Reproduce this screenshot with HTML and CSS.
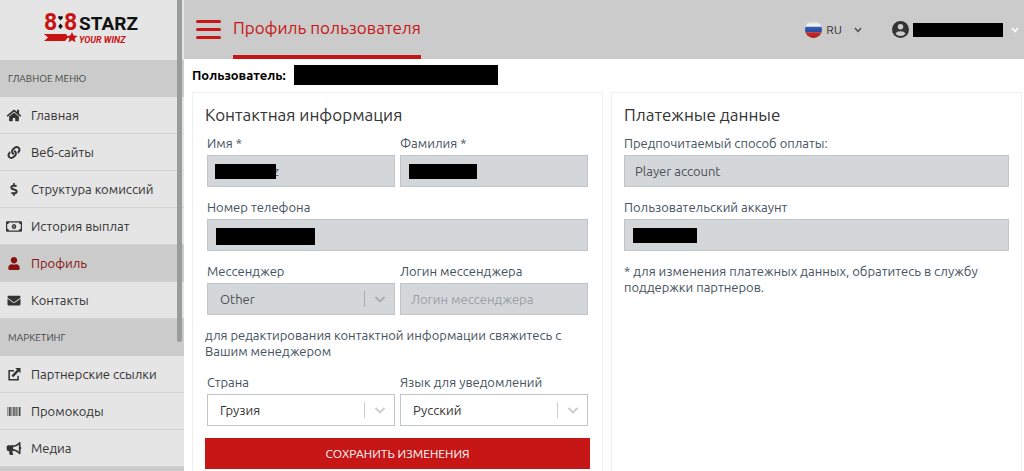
FILE: index.html
```
<!DOCTYPE html>
<html lang="ru">
<head>
    <meta charset="UTF-8">
    <meta name="viewport" content="width=device-width, initial-scale=1">
    <title>Профиль пользователя</title>
    <link rel="stylesheet" href="styles.css">
</head>
<body>
<div class="layout">
    <aside class="sidebar">
        <a class="logo" href="#">
            <svg width="96" height="40" viewBox="0 -6 96 40">
                <text class="logo-eight" x="0" y="18">8</text>
                <text class="logo-eight" x="20" y="18">8</text>
                <path d="M16.500 8.500l-2.200-2.400a1.300 1.300 0 0 1 2.200-1.400 1.300 1.300 0 0 1 2.200 1.400z" fill="#111"/>
                <path d="M16.500 11.500l1.900 2.300a1.200 1.200 0 0 1-1.500 1.800l.6 1.200h-2l.6-1.200a1.200 1.200 0 0 1-1.500-1.800z" fill="#111"/>
                <text class="logo-name" x="35" y="18">STARZ</text>
                <path d="M0 22h22l2 3.500-3 3.500H0l4-3.500z" fill="#c91212"/>
                <path d="M28 20l1.600 3.500 3.900.4-2.900 2.600.9 3.800-3.500-2-3.500 2 .9-3.800-2.900-2.600 3.900-.4z" fill="#c91212"/>
                <text class="logo-slogan" x="35" y="31">YOUR WINZ</text>
            </svg>
        </a>
        <h2 class="menu-title">ГЛАВНОЕ МЕНЮ</h2>
        <ul class="menu">
            <li><a href="#">
                <svg class="icon" viewBox="0 0 576 512"><path d="M280.37 148.26L96 300.11V464a16 16 0 0 0 16 16l112.06-.29a16 16 0 0 0 15.92-16V368a16 16 0 0 1 16-16h64a16 16 0 0 1 16 16v95.64a16 16 0 0 0 16 16.05L464 480a16 16 0 0 0 16-16V300L295.67 148.26a12.19 12.19 0 0 0-15.3 0zM571.6 251.47L488 182.56V44.05a12 12 0 0 0-12-12h-56a12 12 0 0 0-12 12v72.61L318.47 43a48 48 0 0 0-61 0L4.34 251.47a12 12 0 0 0-1.6 16.9l25.5 31A12 12 0 0 0 45.15 301l235.22-193.74a12.19 12.19 0 0 1 15.3 0L530.9 301a12 12 0 0 0 16.9-1.6l25.5-31a12 12 0 0 0-1.7-16.93z"/></svg>
                Главная</a></li>
            <li><a href="#">
                <svg class="icon" viewBox="0 0 512 512"><path d="M326.612 185.391c59.747 59.809 58.927 155.698.36 214.59-.11.12-.24.25-.36.37l-67.2 67.2c-59.27 59.27-155.699 59.262-214.96 0-59.27-59.26-59.27-155.7 0-214.96l37.106-37.106c9.84-9.84 26.786-3.3 27.294 10.606.648 17.722 3.826 35.527 9.69 52.721 1.986 5.822.567 12.262-3.783 16.612l-13.087 13.087c-28.026 28.026-28.905 73.66-1.155 101.96 28.024 28.579 74.086 28.749 102.325.51l67.2-67.19c28.191-28.191 28.073-73.757 0-101.83-3.701-3.694-7.429-6.564-10.341-8.569a16.037 16.037 0 0 1-6.947-12.606c-.396-10.567 3.348-21.456 11.698-29.806l21.054-21.055c5.521-5.521 14.182-6.199 20.584-1.731a152.482 152.482 0 0 1 20.522 17.197zM467.547 44.449c-59.261-59.262-155.69-59.27-214.96 0l-67.2 67.2c-.12.12-.25.25-.36.37-58.566 58.892-59.387 154.781.36 214.59a152.454 152.454 0 0 0 20.521 17.196c6.402 4.468 15.064 3.789 20.584-1.731l21.054-21.055c8.35-8.35 12.094-19.239 11.698-29.806a16.037 16.037 0 0 0-6.947-12.606c-2.912-2.005-6.64-4.875-10.341-8.569-28.073-28.073-28.191-73.639 0-101.83l67.2-67.19c28.239-28.239 74.3-28.069 102.325.51 27.75 28.3 26.872 73.934-1.155 101.96l-13.087 13.087c-4.35 4.35-5.769 10.79-3.783 16.612 5.864 17.194 9.042 34.999 9.69 52.721.509 13.906 17.454 20.446 27.294 10.606l37.106-37.106c59.271-59.259 59.271-155.699.001-214.959z"/></svg>
                Веб-сайты</a></li>
            <li><a href="#">
                <svg class="icon" viewBox="0 0 288 512"><path d="M209.2 233.4l-108-31.6C88.7 198.2 80 186.5 80 173.5c0-16.3 13.2-29.5 29.5-29.5h66.3c12.2 0 24.2 3.7 34.2 10.5 6.1 4.1 14.3 3.1 19.5-2l34.8-34c7.1-6.9 6.1-18.4-1.8-24.5C238 74.8 207.4 64.1 176 64V16c0-8.8-7.2-16-16-16h-32c-8.8 0-16 7.2-16 16v48h-2.5C45.8 64-5.4 118.7.5 183.6c4.2 46.1 39.4 83.6 83.8 96.6l102.5 30c12.5 3.7 21.2 15.3 21.2 28.3 0 16.3-13.2 29.5-29.5 29.5h-66.3C100 368 88 364.3 78 357.5c-6.1-4.1-14.3-3.1-19.5 2l-34.8 34c-7.1 6.9-6.1 18.4 1.8 24.5 24.5 19.2 55.1 29.9 86.5 30v48c0 8.8 7.2 16 16 16h32c8.8 0 16-7.2 16-16v-48.2c46.6-.9 90.3-28.6 105.7-72.7 21.5-61.6-14.6-124.8-72.5-141.7z"/></svg>
                Структура комиссий</a></li>
            <li><a href="#">
                <svg class="icon" viewBox="0 0 16 12"><path fill-rule="evenodd" d="M1 .8h14a1 1 0 0 1 1 1v8.400a1 1 0 0 1-1 1H1a1 1 0 0 1-1-1V1.800a1 1 0 0 1 1-1zM3 2.100a1.800 1.800 0 0 1-1.800 1.700v4.400A1.800 1.800 0 0 1 3 9.900h10a1.800 1.800 0 0 1 1.800-1.700V3.800A1.800 1.800 0 0 1 13 2.100z"/><ellipse cx="8" cy="6" rx="2.200" ry="2.600"/><path d="M8 4.700v2.600" stroke="#e5e5e5" stroke-width=".8"/></svg>
                История выплат</a></li>
            <li class="active"><a href="#">
                <svg class="icon" viewBox="0 0 448 512"><path d="M224 256c70.7 0 128-57.3 128-128S294.7 0 224 0 96 57.3 96 128s57.3 128 128 128zm89.6 32h-16.7c-22.2 10.2-46.9 16-72.9 16s-50.6-5.8-72.9-16h-16.7C60.2 288 0 348.2 0 422.4V464c0 26.5 21.5 48 48 48h352c26.5 0 48-21.5 48-48v-41.6c0-74.2-60.2-134.4-134.4-134.4z"/></svg>
                Профиль</a></li>
            <li><a href="#">
                <svg class="icon" viewBox="0 0 512 512"><path d="M502.3 190.8c3.9-3.1 9.7-.2 9.7 4.7V400c0 26.5-21.5 48-48 48H48c-26.5 0-48-21.5-48-48V195.6c0-5 5.7-7.8 9.7-4.7 22.4 17.4 52.1 39.5 154.1 113.6 21.1 15.4 56.7 47.8 92.2 47.6 35.7.3 72-32.8 92.3-47.6 102-74.1 131.6-96.3 154-113.7zM256 320c23.2.4 56.6-29.2 73.4-41.4 132.7-96.3 142.8-104.7 173.4-128.7 5.8-4.5 9.2-11.5 9.2-18.9v-19c0-26.5-21.5-48-48-48H48c-26.5 0-48 21.5-48 48v19c0 7.4 3.4 14.3 9.2 18.9 30.6 23.9 40.7 32.4 173.4 128.7 16.8 12.2 50.2 41.8 73.4 41.4z"/></svg>
                Контакты</a></li>
        </ul>
        <h2 class="menu-title">МАРКЕТИНГ</h2>
        <ul class="menu">
            <li><a href="#">
                <svg class="icon" viewBox="0 0 16 16"><path d="M8 3.500H2v11h11V9.500" fill="none" stroke="#333" stroke-width="1.900"/><path d="M9.500 0H16v6.500l-2.100-2.100-6.900 6.900-2.100-2.100 6.900-6.900z"/></svg>
                Партнерские ссылки</a></li>
            <li><a href="#">
                <svg class="icon" viewBox="0 0 16 13"><path d="M1.500 2h.8v9h-.8zM3 2h1.700v9H3zM5.500 2h.8v9h-.8zM7.200 2h1.500v9H7.200zM9.500 2h1.200v9H9.500zM11.500 2h.8v9h-.8zM13 2h1.500v9H13z" opacity=".85"/></svg>
                Промокоды</a></li>
            <li><a href="#">
                <svg class="icon" viewBox="0 0 576 512"><path d="M576 240c0-23.63-12.95-44.04-32-55.12V32.01C544 23.26 537.02 0 512 0c-7.12 0-14.19 2.38-19.98 7.02l-85.03 68.03C364.28 109.19 310.66 128 256 128H64c-35.35 0-64 28.65-64 64v96c0 35.35 28.65 64 64 64h33.7c-1.39 10.48-2.18 21.14-2.18 32 0 39.77 9.26 77.35 25.56 110.94 5.19 10.69 16.52 17.06 28.4 17.06h74.28c26.05 0 41.69-29.84 25.9-50.56-16.4-21.52-26.15-48.36-26.15-77.44 0-11.11 1.62-21.79 4.41-32H256c54.66 0 108.28 18.81 150.98 52.95l85.03 68.03a32.023 32.023 0 0 0 19.98 7.02c24.92 0 32-22.78 32-32V295.13C563.05 284.04 576 263.63 576 240zm-96 141.42l-33.05-26.44C392.95 311.78 325.12 288 256 288v-96c69.12 0 136.95-23.78 190.95-66.98L480 98.58v282.84z"/></svg>
                Медиа</a></li>
        </ul>
        <div class="menu-title"></div>
        <div class="scroll-thumb"></div>
    </aside>

    <div class="content">
        <header class="header">
            <button class="burger" type="button" aria-label="Меню"><i></i><i></i><i></i></button>
            <h1 class="page-title">Профиль пользователя</h1>
            <button class="lang" type="button">
                <svg width="17" height="17" viewBox="0 0 18 18">
                    <defs>
                        <clipPath id="ball"><circle cx="9" cy="9" r="9"/></clipPath>
                        <linearGradient id="shine" x1="0" y1="0" x2="0" y2="1">
                            <stop offset="0" stop-color="#888" stop-opacity=".4"/>
                            <stop offset=".3" stop-color="#fff" stop-opacity=".2"/>
                            <stop offset="1" stop-color="#000" stop-opacity=".2"/>
                        </linearGradient>
                    </defs>
                    <g clip-path="url(#ball)">
                        <path d="M0 0h18v6H0z" fill="#f4f4f4"/>
                        <path d="M0 6h18v6H0z" fill="#0b3da8"/>
                        <path d="M0 12h18v6H0z" fill="#d81e1e"/>
                        <path d="M0 0h18v18H0z" fill="url(#shine)"/>
                    </g>
                </svg>
                <span>RU</span>
                <svg class="lang-arrow" width="8" height="6" viewBox="0 0 8 6"><path d="M1 1l3 3.500L7 1" fill="none" stroke="#444" stroke-width="1.200"/></svg>
            </button>
            <button class="account" type="button" aria-label="Аккаунт">
                <svg width="17" height="17" viewBox="0 0 16 16"><circle cx="8" cy="8" r="8" fill="#333"/><circle cx="8" cy="5.500" r="2.600" fill="#ccc"/><path d="M3.300 12c.6-1.700 2.700-2.400 4.700-2.400s4.100.7 4.700 2.400A6 6 0 0 1 8 14.200 6 6 0 0 1 3.300 12z" fill="#ccc"/></svg>
                <span class="mask account-mask"></span>
                <svg width="8" height="6" viewBox="0 0 8 6"><path d="M1 1l3 3.500L7 1" fill="none" stroke="#fff" stroke-width="1.500"/></svg>
            </button>
        </header>

        <main class="main">
            <div class="user"><b>Пользователь:</b><span class="mask user-mask"></span></div>
            <div class="panels">
                <section class="panel">
                    <h3>Контактная информация</h3>
                    <form>
                        <div class="fields">
                            <div class="field">
                                <label for="name">Имя *</label>
                                <div class="control">
                                    <input class="masked" id="name" type="text" value="z" disabled>
                                    <span class="mask name-mask"></span>
                                </div>
                            </div>
                            <div class="field">
                                <label for="surname">Фамилия *</label>
                                <div class="control">
                                    <input id="surname" type="text" disabled>
                                    <span class="mask surname-mask"></span>
                                </div>
                            </div>
                            <div class="field wide">
                                <label for="phone">Номер телефона</label>
                                <div class="control">
                                    <input id="phone" type="tel" disabled>
                                    <span class="mask phone-mask"></span>
                                </div>
                            </div>
                            <div class="field">
                                <label for="messenger">Мессенджер</label>
                                <div class="control">
                                    <select id="messenger" disabled><option>Other</option></select>
                                    <svg class="arrow" viewBox="0 0 31 16"><path d="M.5 0v16" stroke="#aaa"/><path d="M11.500 6l4.500 4.500L20.500 6" fill="none" stroke="#aaa" stroke-width="1.800"/></svg>
                                </div>
                            </div>
                            <div class="field">
                                <label for="login">Логин мессенджера</label>
                                <div class="control">
                                    <input id="login" type="text" placeholder="Логин мессенджера" disabled>
                                </div>
                            </div>
                        </div>
                        <p class="note">для редактирования контактной информации свяжитесь с Вашим менеджером</p>
                        <div class="fields">
                            <div class="field">
                                <label for="country">Страна</label>
                                <div class="control">
                                    <select id="country"><option>Грузия</option></select>
                                    <svg class="arrow" viewBox="0 0 31 16"><path d="M.5 0v16" stroke="#ccc"/><path d="M11.500 6l4.500 4.500L20.500 6" fill="none" stroke="#ccc" stroke-width="1.800"/></svg>
                                </div>
                            </div>
                            <div class="field">
                                <label for="language">Язык для уведомлений</label>
                                <div class="control">
                                    <select id="language"><option>Русский</option></select>
                                    <svg class="arrow" viewBox="0 0 31 16"><path d="M.5 0v16" stroke="#ccc"/><path d="M11.500 6l4.500 4.500L20.500 6" fill="none" stroke="#ccc" stroke-width="1.800"/></svg>
                                </div>
                            </div>
                        </div>
                        <button class="save" type="submit">СОХРАНИТЬ ИЗМЕНЕНИЯ</button>
                    </form>
                </section>

                <section class="panel">
                    <h3>Платежные данные</h3>
                    <div class="payment">
                        <div class="field">
                            <label for="method">Предпочитаемый способ оплаты:</label>
                            <div class="control">
                                <input id="method" type="text" value="Player account" disabled>
                            </div>
                        </div>
                        <div class="field">
                            <label for="player">Пользовательский аккаунт</label>
                            <div class="control">
                                <input id="player" type="text" disabled>
                                <span class="mask player-mask"></span>
                            </div>
                        </div>
                    </div>
                    <p class="note">* для изменения платежных данных, обратитесь в службу поддержки партнеров.</p>
                </section>
            </div>
        </main>
    </div>
</div>
</body>
</html>
```
FILE: styles.css
```
* {
    box-sizing: border-box;
    margin: 0;
    padding: 0;
}
body {
    font-family: Ubuntu, "Noto Sans", sans-serif;
    font-size: 13px;
    line-height: 16px;
    color: #45525e;
    background: #fff;
}
button, input, select {
    font: inherit;
    color: inherit;
}
button {
    border: 0;
    background: none;
    cursor: pointer;
}
.layout {
    display: flex;
    height: 100vh;
    overflow: hidden;
}

/* sidebar */
.sidebar {
    position: relative;
    flex: 0 0 184px;
    overflow: hidden;
    background: #e5e5e5;
}
.logo {
    display: flex;
    justify-content: center;
    height: 60px;
    padding-top: 6px;
}
.logo-eight {
    font: bold 23px "Roboto", sans-serif;
    fill: #c91212;
}
.logo-name {
    font: bold 19px "Roboto", sans-serif;
    fill: #111;
}
.logo-slogan {
    font: italic bold 9px "Roboto", sans-serif;
    fill: #c91212;
}
.menu-title {
    height: 37px;
    padding-left: 8px;
    font-size: 10px;
    font-weight: normal;
    line-height: 37px;
    color: #444;
    background: #cbcbcb;
}
.menu {
    list-style: none;
}
.menu a {
    display: flex;
    align-items: center;
    gap: 9px;
    height: 37px;
    padding-left: 6px;
    border-bottom: 1px solid #d2d2d2;
    color: #333;
    text-decoration: none;
}
.menu .active a {
    color: #861212;
    background: #cbcbcb;
}
.icon {
    width: 16px;
    height: 13px;
    fill: currentColor;
}
.scroll-thumb {
    position: absolute;
    top: 0;
    right: 2px;
    width: 5px;
    height: 342px;
    border-radius: 0 0 3px 3px;
    background: #9a9b9d;
}

/* header */
.content {
    flex: 1;
    min-width: 0;
}
.header {
    display: flex;
    align-items: center;
    height: 59px;
    padding: 0 5px 0 12px;
    background: #cbcbcb;
}
.burger {
    display: flex;
    flex-direction: column;
    gap: 5px;
    width: 25px;
    margin-right: 12px;
}
.burger i {
    height: 3px;
    border-radius: 2px;
    background: #c61616;
}
.page-title {
    height: 59px;
    margin-right: auto;
    border-bottom: 4px solid #c61616;
    font-size: 17px;
    font-weight: normal;
    line-height: 55px;
    color: #c61616;
}
.lang, .account {
    display: flex;
    align-items: center;
    font-size: 12px;
    color: #333;
}
.lang {
    gap: 4px;
    margin-right: 30px;
}
.lang-arrow {
    margin-left: 8px;
}
.account {
    gap: 4px;
}
.mask {
    display: block;
    background: #000;
}
.account-mask {
    width: 90px;
    height: 14px;
    margin-right: 4px;
}

/* profile */
.main {
    padding: 6px 2px 0 8px;
}
.user {
    display: flex;
    align-items: center;
    gap: 8px;
    height: 20px;
    color: #000;
}
.user-mask {
    width: 204px;
    height: 20px;
}
.panels {
    display: grid;
    grid-template-columns: 1fr 1fr;
    gap: 8px;
    margin-top: 7px;
}
.panel {
    padding: 14px 12px;
    border: 1px solid #f0f0f0;
}
.panel h3 {
    margin-bottom: 12px;
    font-size: 17px;
    font-weight: normal;
    color: #333;
}
.fields {
    display: grid;
    grid-template-columns: 1fr 1fr;
    gap: 12px 5px;
    padding: 0 2px;
}
.payment {
    display: grid;
    gap: 12px;
}
.wide {
    grid-column: 1 / 3;
}
.field label {
    display: block;
    margin-bottom: 4px;
}
.control {
    position: relative;
}
.control input, .control select {
    display: block;
    width: 100%;
    height: 32px;
    padding: 0 10px;
    border: 1px solid #c0c5c9;
    border-radius: 0;
    appearance: none;
    background: #fff;
    color: #333;
    opacity: 1;
}
.control select {
    padding: 0 12px;
}
.control input:disabled, .control select:disabled {
    background: #d3d7da;
    color: #4a4f54;
}
.control .masked {
    padding-left: 65px;
}
.control ::placeholder {
    color: #999fa4;
}
.arrow {
    position: absolute;
    top: 8px;
    right: 0;
    width: 31px;
    height: 16px;
    pointer-events: none;
}

/* bars over the hidden personal data */
.control .mask {
    position: absolute;
    top: 9px;
    left: 9px;
    height: 15px;
}
.control .name-mask {
    left: 8px;
    width: 61px;
}
.control .surname-mask {
    width: 68px;
}
.control .phone-mask {
    width: 99px;
    height: 17px;
}
.control .player-mask {
    width: 64px;
}
.note {
    margin: 12px 0 15px;
}
.save {
    display: block;
    width: 100%;
    height: 31px;
    margin-top: 12px;
    background: #c61616;
    color: #fff;
    font-size: 12px;
}
```
